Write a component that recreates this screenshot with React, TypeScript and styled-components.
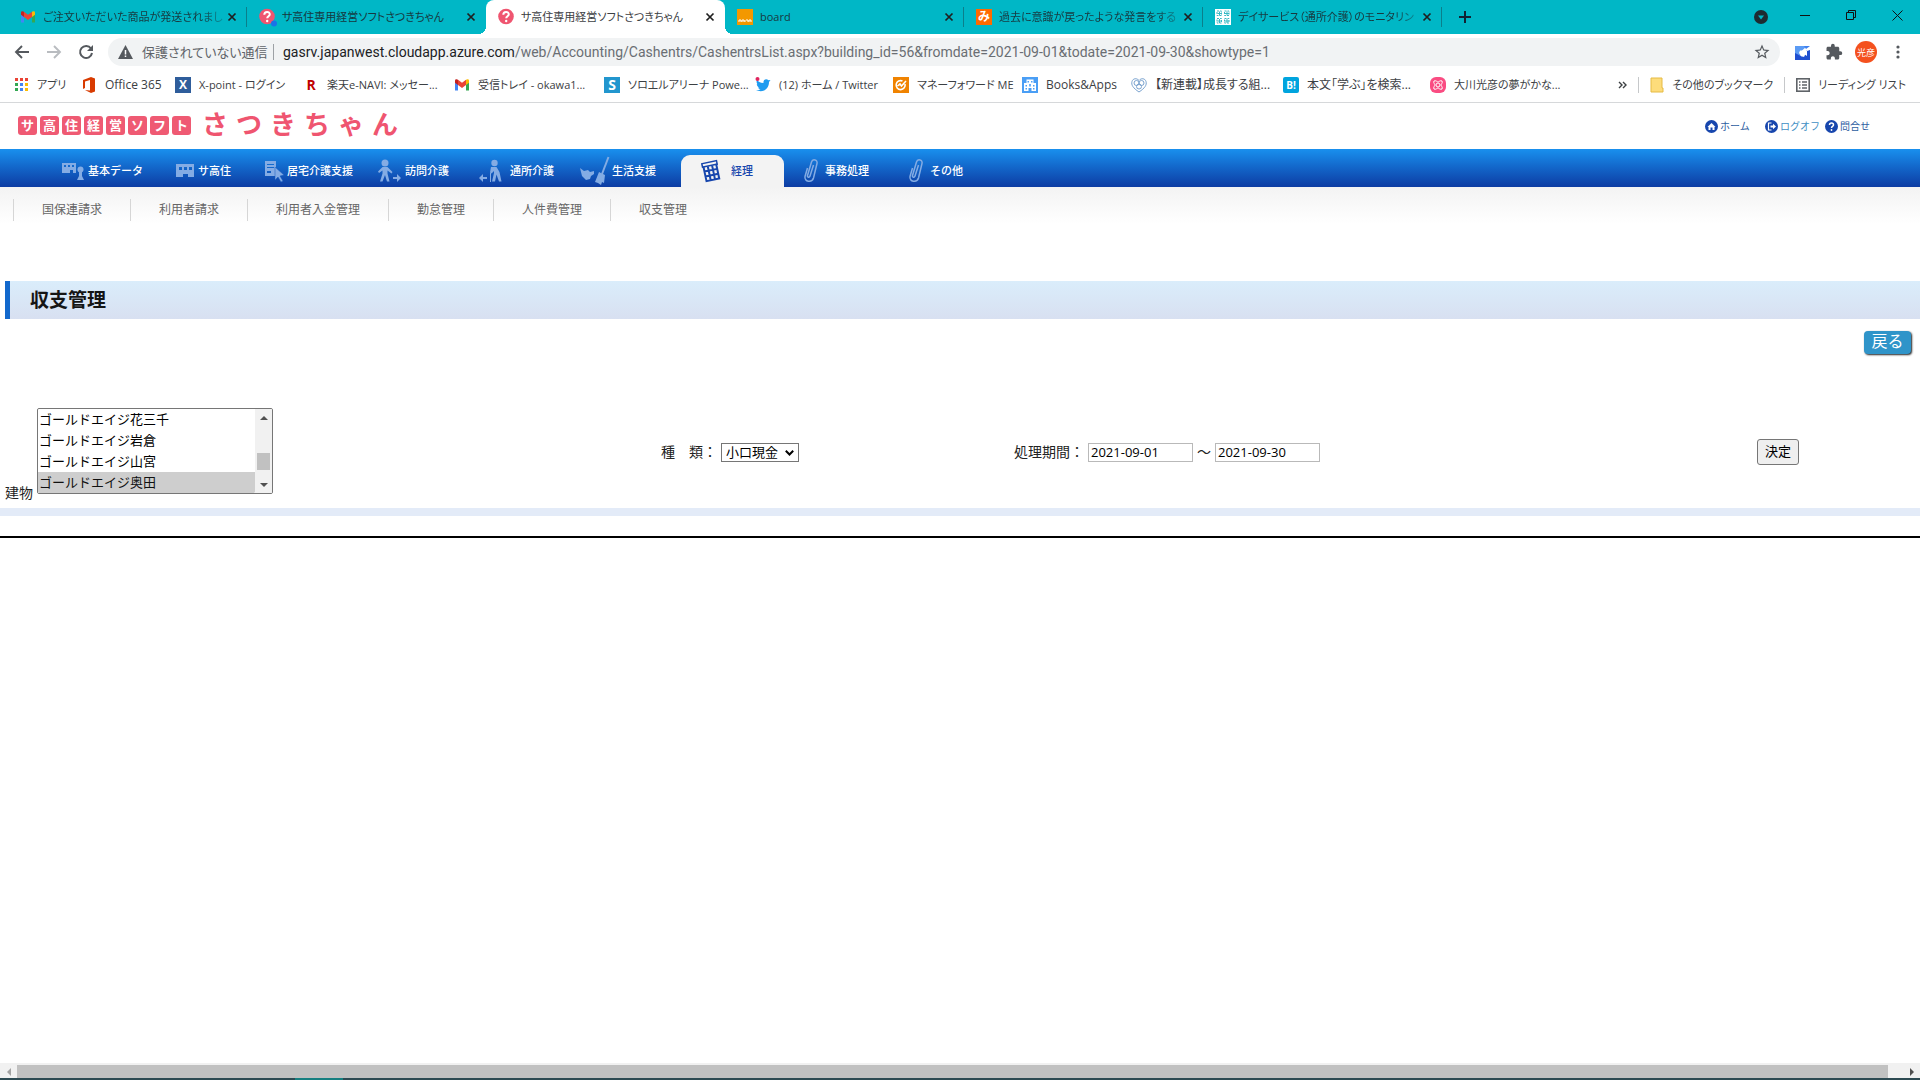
import React from 'react';
import styled, { createGlobalStyle, css } from 'styled-components';
import { MdExtension, MdStarOutline } from 'react-icons/md';

const uiFont = '"Open Sans", "Noto Sans CJK JP", sans-serif';
const pageFont = '"Open Sans", "Noto Sans CJK JP", sans-serif';

const GlobalStyle = createGlobalStyle`
  *, *::before, *::after { box-sizing: border-box; }
  body { margin: 0; background: #fff; font-family: ${pageFont}; font-size: 14px; color: #222; }
  button, input, select { font-family: inherit; margin: 0; }
  a { text-decoration: none; color: inherit; }
  svg { display: block; flex: none; }
`;

const Window = styled.div`
  min-height: 100vh;
  display: flex;
  flex-direction: column;
  overflow: hidden;
`;

/* ---------- browser frame ---------- */
const TabStrip = styled.div`
  display: flex;
  align-items: stretch;
  height: 34px;
  padding-left: 8px;
  background: #00b7c6;
  font-family: ${uiFont};
  font-feature-settings: "palt";
  font-size: 11px;
`;
const Tab = styled.div<{ $active?: boolean; $line?: boolean }>`
  display: flex;
  align-items: center;
  width: 239px;
  padding: 0 9px 0 12px;
  color: #17393f;
  ${p => p.$active && css`
    position: relative;
    background: #fff;
    border-radius: 8px 8px 0 0;
    color: #3c4043;
    &::before, &::after {
      content: "";
      position: absolute;
      bottom: 0;
      width: 8px;
      height: 8px;
    }
    &::before { right: 100%; background: radial-gradient(circle at 0 0, transparent 8px, #fff 8px); }
    &::after { left: 100%; background: radial-gradient(circle at 100% 0, transparent 8px, #fff 8px); }
  `}
  ${p => p.$line && css`
    background: linear-gradient(#0b7f8b, #0b7f8b) right center / 1px 20px no-repeat;
  `}
`;
const TabTitle = styled.span<{ $fade?: boolean }>`
  flex: 1;
  min-width: 0;
  margin-left: 7px;
  overflow: hidden;
  white-space: nowrap;
  line-height: 20px;
  ${p => p.$fade && css`mask-image: linear-gradient(90deg, #000 86%, rgba(0, 0, 0, 0.2));`}
`;
const PlainButton = styled.button`
  display: flex;
  align-items: center;
  justify-content: center;
  padding: 0;
  border: 0;
  background: none;
  color: inherit;
  flex: none;
`;
const TabClose = styled(PlainButton)`
  width: 12px;
  height: 16px;
  color: #1f1f1f;
`;
const NewTab = styled(PlainButton)`
  width: 46px;
  color: #123;
`;
const WindowControls = styled.div`
  display: flex;
  margin-left: auto;
  color: #111;
`;
const TabSearch = styled(PlainButton)`
  width: 42px;
`;
const WindowButton = styled(PlainButton)`
  width: 46px;
  padding-bottom: 4px;
`;
const Toolbar = styled.div`
  display: flex;
  align-items: center;
  height: 36px;
  padding: 0 6px;
  color: #55595e;
  font-family: ${uiFont};
`;
const ToolButton = styled(PlainButton)<{ $dim?: boolean }>`
  width: 32px;
  height: 28px;
  color: ${p => (p.$dim ? '#b9bcc0' : '#55595e')};
`;
const AddressBar = styled.div`
  display: flex;
  align-items: center;
  flex: 1;
  height: 28px;
  margin: 0 6px;
  padding: 0 9px 0 10px;
  border-radius: 14px;
  background: #f1f3f4;
`;
const Security = styled.span`
  width: 132px;
  margin-left: 9px;
  border-right: 1px solid #9da1a5;
  font-size: 13px;
  font-feature-settings: "palt";
  line-height: 16px;
  white-space: nowrap;
  color: #5f6368;
`;
const AddressText = styled.span`
  flex: 1;
  margin-left: 9px;
  font-family: Roboto, sans-serif;
  font-size: 14px;
  line-height: 20px;
  white-space: nowrap;
  color: #6a6e73;
  b { font-weight: 400; color: #202124; }
`;
const Avatar = styled.span`
  display: flex;
  align-items: center;
  justify-content: center;
  width: 22px;
  height: 22px;
  border-radius: 50%;
  background: #f4511e;
  color: #fff;
  font-size: 9px;
`;
const Bookmarks = styled.nav`
  display: flex;
  align-items: center;
  height: 33px;
  padding: 0 14px 2px 13px;
  border-bottom: 1px solid #d6d8da;
  font-family: ${uiFont};
  font-feature-settings: "palt";
  font-size: 12px;
  color: #3c4043;
`;
const Bookmark = styled.a<{ $w?: number; $kana?: boolean }>`
  display: flex;
  align-items: center;
  gap: 8px;
  ${p => p.$w && css`width: ${p.$w}px;`}
  font-size: ${p => (p.$kana ? 11 : 12)}px;
  line-height: 20px;
  white-space: nowrap;
`;
const BookmarkEnd = styled.div`
  display: flex;
  align-items: center;
  gap: 11px;
  margin-left: auto;
`;
const Divider = styled.span`
  width: 1px;
  height: 16px;
  background: #c6c8ca;
`;
const Badge = styled.span<{ $bg: string; $fg?: string; $r?: number; $size?: number }>`
  display: flex;
  align-items: center;
  justify-content: center;
  flex: none;
  width: 16px;
  height: 16px;
  border-radius: ${p => p.$r || 0}px;
  background: ${p => p.$bg};
  color: ${p => p.$fg || '#fff'};
  font-size: ${p => p.$size || 12}px;
  font-weight: 700;
  line-height: 16px;
`;

/* ---------- application ---------- */
const Header = styled.header`
  display: flex;
  justify-content: space-between;
  align-items: flex-start;
  height: 46px;
  padding: 7px 50px 0 18px;
`;
const Brand = styled.div`
  display: flex;
  align-items: center;
  gap: 11px;
  height: 30px;
  color: #ef5570;
`;
const BrandTiles = styled.div`
  display: flex;
  gap: 3px;
`;
const BrandTile = styled.span`
  width: 19px;
  height: 19px;
  border-radius: 3px;
  background: #ef5a73;
  color: #fff;
  font-size: 13px;
  font-weight: 700;
  line-height: 18px;
  text-align: center;
`;
const BrandName = styled.div`
  display: flex;
  gap: 8px;
  font-size: 26px;
  font-weight: 700;
  line-height: 28px;
  padding-bottom: 2px;
`;
const UserLinks = styled.div`
  display: flex;
  align-items: center;
  padding-top: 8px;
  font-size: 10px;
  line-height: 16px;
`;
const UserLink = styled.a<{ $w?: number; $c?: string }>`
  display: flex;
  align-items: center;
  gap: 2px;
  ${p => p.$w && css`width: ${p.$w}px;`}
  color: ${p => p.$c || '#2d5d9f'};
`;
const MainNav = styled.nav`
  display: flex;
  align-items: flex-end;
  height: 38px;
  padding-left: 44px;
  background: linear-gradient(#1990ee, #1369cc 45%, #0d3ca3);
`;
const NavItem = styled.a<{ $active?: boolean }>`
  display: flex;
  align-items: center;
  height: 32px;
  padding: 0 12px;
  color: #fff;
  font-size: 11px;
  font-weight: 500;
  line-height: 32px;
  white-space: nowrap;
  ${p => p.$active && css`
    margin-left: 13px;
    padding: 0 31px 0 12px;
    border-radius: 9px 9px 0 0;
    background: #f3f3f3;
    color: #1746ad;
  `}
`;
const NavLabel = styled.span`
  height: 32px;
`;
const NavIcon = styled.span<{ $w: number; $gap?: number }>`
  display: flex;
  justify-content: flex-end;
  width: ${p => p.$w}px;
  padding-right: ${p => p.$gap ?? 4}px;
  color: #84ace4;
`;
const SubNav = styled.nav`
  display: flex;
  align-items: center;
  height: 46px;
  padding-left: 13px;
  background: linear-gradient(#f3f3f3, #fff 80%);
`;
const SubItem = styled.a`
  height: 22px;
  padding: 0 28px;
  border-left: 1px solid #d6d6d6;
  color: #666;
  font-size: 12px;
  line-height: 22px;
`;
const PageTitle = styled.h1`
  margin: 48px 0 0 5px;
  padding-left: 20px;
  border-left: 5px solid #1268cc;
  background: linear-gradient(#daedfb, #d8e0f1);
  color: #151515;
  font-size: 19px;
  font-weight: 700;
  line-height: 38px;
`;
const Actions = styled.div`
  display: flex;
  justify-content: flex-end;
  padding: 12px 9px 0;
`;
const BackButton = styled.button`
  width: 47px;
  height: 23px;
  padding: 0 0 3px;
  border: 0;
  border-radius: 4px;
  background: #2f94c9;
  box-shadow: 1px 1px 2px #222;
  color: #fff;
  font-size: 16px;
  line-height: 20px;
`;
const Filters = styled.form`
  display: grid;
  grid-template-columns: 656fr 353fr 743fr 163fr;
  margin-top: 54px;
  padding: 0 0 14px 5px;
  border-bottom: 8px solid #e3ebf8;
`;
const Field = styled.div<{ $end?: boolean }>`
  display: flex;
  align-items: ${p => (p.$end ? 'flex-end' : 'center')};
  gap: 4px;
  height: 86px;
  padding-top: ${p => (p.$end ? 0 : 2)}px;
  white-space: nowrap;
`;
const FieldLabel = styled.label`
  line-height: 20px;
`;
const BuildingLabel = styled(FieldLabel)`
  line-height: 2px;
`;
const ListFrame = styled.div`
  display: flex;
  width: 236px;
  height: 86px;
  border: 1px solid #767676;
  border-radius: 2px;
  overflow: hidden;
`;
const BuildingList = styled.select`
  flex: 1;
  height: 84px;
  padding: 0;
  border: 0;
  outline: 0;
  overflow: hidden;
  background: #fff;
  color: #000;
  font-size: 13px;
  option {
    height: 21px;
    min-height: 21px;
    padding: 0 1px 2px;
    line-height: 17px;
  }
  option:checked {
    background: #cecece linear-gradient(#cecece, #cecece);
    color: #111;
  }
`;
const ScrollColumn = styled.div`
  display: flex;
  flex-direction: column;
  align-items: center;
  width: 17px;
  background: #f1f1f1;
`;
const ScrollEnd = styled.span`
  display: flex;
  align-items: center;
  justify-content: center;
  width: 17px;
  height: 17px;
`;
const ListThumb = styled.span`
  width: 13px;
  height: 17px;
  margin: 27px 0 6px;
  background: #c1c1c1;
`;
const KindBox = styled.span`
  position: relative;
  display: flex;
  svg {
    position: absolute;
    right: 5px;
    top: 7px;
    pointer-events: none;
  }
`;
const KindSelect = styled.select`
  appearance: none;
  width: 78px;
  height: 19px;
  padding: 0 0 0 4px;
  border: 1px solid #767676;
  border-radius: 0;
  background: #fff;
  color: #000;
  font-size: 13px;
  line-height: 16px;
`;
const DateInput = styled.input`
  width: 105px;
  height: 19px;
  padding: 0 2px;
  border: 1px solid #b9b9b9;
  color: #000;
  font-size: 13px;
`;
const SubmitButton = styled.button`
  width: 42px;
  height: 26px;
  padding: 0 0 2px;
  border: 1px solid #767676;
  border-radius: 3px;
  background: #efefef;
  color: #000;
  font-size: 13px;
  line-height: 20px;
`;
const Results = styled.main`
  flex: 1;
  margin-top: 20px;
  border-top: 2px solid #000;
`;
const PageScroll = styled.div`
  display: flex;
  height: 15px;
  padding-top: 2px;
  background: #f1f1f1;
`;
const PageScrollEnd = styled.span<{ $w: number; $right?: boolean }>`
  display: flex;
  align-items: center;
  justify-content: ${p => (p.$right ? 'flex-end' : 'center')};
  width: ${p => p.$w}px;
  padding-right: ${p => (p.$right ? 6 : 0)}px;
`;
const PageThumb = styled.span`
  flex: 1;
  background: #c1c1c1;
`;
const TaskEdge = styled.div`
  height: 2px;
  background: linear-gradient(90deg, transparent 295px, #167f80 295px, #167f80 343px, transparent 343px), #2d4a52;
`;

/* ---------- drawings ---------- */
const Cross = () => (
  <svg width="10" height="10" viewBox="0 0 10 10"><path d="M1.5 1.5l7 7M8.5 1.5l-7 7" stroke="currentColor" strokeWidth="1.7" /></svg>
);
const Gmail = () => (
  <svg width="16" height="16" viewBox="0 0 16 16">
    <path d="M1 4v9.500h3V7z" fill="#4285f4" /><path d="M15 4v9.500h-3V7z" fill="#34a853" />
    <path d="M1 3.500C1 2 3 1.800 4 2.700V8L1 5.800z" fill="#c5221f" />
    <path d="M4 2.700L8 5.800l4-3.100V8l-4 3-4-3z" fill="#ea4335" />
    <path d="M15 3.500C15 2 13 1.800 12 2.700V8l3-2.200z" fill="#fbbc04" />
  </svg>
);
const Question = ({ dot }: { dot?: boolean }) => (
  <svg width="16" height="18" viewBox="0 0 16 18" overflow="visible">
    <circle cx="8" cy="8.500" r="7.800" fill="#ef5570" />
    <path d="M5.300 6.800C5.300 3 10.800 3 10.800 6.300c0 2-2.600 2-2.600 4" fill="none" stroke="#fff" strokeWidth="2" />
    <circle cx="8.200" cy="13" r="1.200" fill="#fff" />
    {dot && <circle cx="15" cy="15.500" r="3" fill="#1a73e8" />}
  </svg>
);
const GridFav = () => (
  <svg width="16" height="16" viewBox="0 0 16 16">
    <rect width="16" height="16" fill="#fff" />
    {[1.5, 9].map(x => [1.5, 9].map(y => (
      <g key={`${x}-${y}`} fill="none" stroke="#35b9c4">
        <rect x={x + 0.5} y={y + 0.5} width="4.500" height="4.500" strokeDasharray="2 1" /><path d={`M${x + 1} ${y + 3}h4M${x + 3} ${y + 1}v4`} />
      </g>
    )))}
  </svg>
);
const BoardFav = () => (
  <svg width="16" height="16" viewBox="0 0 16 16"><rect width="16" height="16" fill="#f39800" /><path d="M2 13v-2h2v2m1 0v-2h2v2m1-2v2m1-2h2v2m1 0v-2h2v2" stroke="#fff" strokeWidth="1" fill="none" /></svg>
);
const Apps = () => (
  <svg width="16" height="16" viewBox="0 0 16 16">
    {['#ea4335', '#ea4335', '#ea4335', '#34a853', '#4285f4', '#fbbc04', '#34a853', '#4285f4', '#fbbc04'].map((c, i) => (
      <rect key={i} x={2 + (i % 3) * 5} y={1 + Math.floor(i / 3) * 5} width="3" height="3" fill={c} />
    ))}
  </svg>
);
const Office = () => (
  <svg width="16" height="16" viewBox="0 0 16 16"><path d="M10 0L2 3v9l2-1V4.500l5-1.500v10.500L4 13l6 3 4-1.500v-13z" fill="#d83b01" /></svg>
);
const Twitter = () => (
  <svg width="16" height="16" viewBox="0 0 16 16">
    <path d="M1 13c6 3 13 0 13-8l1.500-2-2 .3C11 1 8 3 8.500 6 5 6 3 4.500 2 3c-1 2 0 4 1 4.500L1.800 7c0 2 1.200 3 2.500 3.500H3c.5 1 1.500 1.600 2.500 1.700C4 13 2.500 13.200 1 13z" fill="#1d9bf0" />
    <circle cx="2.500" cy="2" r="2" fill="#e0245e" />
  </svg>
);
const MoneyForward = () => (
  <svg width="16" height="16" viewBox="0 0 16 16"><rect width="16" height="16" fill="#f08300" /><path d="M9.500 4A4.500 4.500 0 1 0 12 7M4.500 9L7 7l1.500 2L13 4" fill="none" stroke="#fff" strokeWidth="1.600" /></svg>
);
const Books = () => (
  <svg width="16" height="16" viewBox="0 0 16 16"><rect width="16" height="16" fill="#4a9ef5" /><path d="M2 6v8h4.500v-3h3v3H14V6h-2.500V2.500h-7V6z" fill="#fff" /><path d="M5.500 4h1.500v1.500H5.500zM9 4h1.500v1.500H9zM3.500 8H5v1.500H3.500zM11 8h1.500v1.500H11zM7.200 7h1.600v2.500H7.200zM3.500 11H5v1.500H3.500zM11 11h1.500v1.500H11z" fill="#4a9ef5" /></svg>
);
const HeartFav = () => (
  <svg width="16" height="16" viewBox="0 0 16 16" fill="none" stroke="#7aa3cf"><path d="M8 15C2 11 0 8 1 4.500 2 1 6 1 8 3.500 10 1 14 1 15 4.500 16 8 14 11 8 15z" /><circle cx="5.500" cy="6" r="2.500" /><circle cx="10.500" cy="6" r="2.500" /><circle cx="8" cy="9.500" r="2.500" /></svg>
);
const Flower = () => (
  <svg width="16" height="16" viewBox="0 0 16 16"><rect width="16" height="16" rx="6" fill="#fa4c82" /><g fill="none" stroke="#fff"><circle cx="8" cy="8" r="2" /><path d="M4 4c2-1 3 1 4 1s2-2 4-1c1 2-1 3-1 4s2 2 1 4c-2 1-3-1-4-1s-2 2-4 1c-1-2 1-3 1-4s-2-2-1-4z" /></g></svg>
);
const Folder = () => (
  <svg width="14" height="16" viewBox="0 0 14 16"><path d="M1 1h11v10h1v4H1z" fill="#fddc7b" stroke="#e6bb45" /></svg>
);
const ReadingList = () => (
  <svg width="14" height="14" viewBox="0 0 14 14"><rect x=".8" y=".8" width="12.400" height="12.400" fill="none" stroke="#5f6368" strokeWidth="1.600" /><path d="M3 4h1.500M6 4h5M3 7h1.500M6 7h5M3 10h1.500M6 10h5" stroke="#5f6368" strokeWidth="1.400" /></svg>
);

const Building = ({ person }: { person?: boolean }) => (
  <svg width={person ? 23 : 19} height="20" viewBox={person ? '0 0 23 20' : '0 0 19 20'} fill="currentColor">
    {person
      ? <><path fillRule="evenodd" d="M1 2h14v10h-3V9H9v3H1zM3 4v2h2V4zm4 0v2h2V4zm4 0v2h2V4z" /><circle cx="19.500" cy="8.500" r="3" /><path d="M18 11h3v4l2 4h-7l2-4z" /></>
      : <path fillRule="evenodd" d="M1 3h18v13h-6v-3H8v3H1zM4 6v3h3V6zm5 0v3h3V6zm5 0v3h3V6z" />}
  </svg>
);
const Plan = () => (
  <svg width="21" height="24" viewBox="0 0 21 24"><path fill="currentColor" fillRule="evenodd" d="M1 2h11v15H1zm2 3v1h7V5zm0 3v1h7V8zm0 4v2h4v-2z" /><path fill="currentColor" stroke="#1458bd" strokeWidth=".5" d="M11 8l9 8-4 1 3 5-2 1-3-5-3 3z" /></svg>
);
const Walker = ({ left }: { left?: boolean }) => (
  <svg width="24" height="24" viewBox="0 0 24 24" fill="currentColor">
    {left ? (
      <><circle cx="15.500" cy="4" r="3.200" /><path d="M12 8h5.500l3 5 2 9.500h-2.500l-2.500-7-1.500 7h-3l2-8.500v-2l-2.500 2.500-1.500-1z" /><path d="M11.500 14v9" stroke="currentColor" /><path d="M0 19l4-4v3h4v2H4v3z" /></>
    ) : (
      <><circle cx="8" cy="4" r="3.500" /><path d="M5.500 8h5l5 5-1 1.500-4-3v3l2 8h-2.500L8 16l-2.500 6.500H3l2.500-8v-3L2 14l-1-1.500z" /><path d="M24 19l-4-4v3h-4v2h4v3z" /></>
    )}
  </svg>
);
const Broom = () => (
  <svg width="30" height="30" viewBox="0 0 30 30" fill="currentColor"><path d="M0 12l4 3 4-1 2 2 4-1v3l-3 2-1 3-4 1-4-4z" /><path d="M28.500 1L22 18" stroke="currentColor" strokeWidth="2" /><path d="M19 16l6 3-1 8-2-1-1 3-3-2-3-1z" /></svg>
);
const Calculator = () => (
  <svg width="20" height="24" viewBox="1 0 20 24"><g transform="rotate(-12 11 12)" fill="none" stroke="#1746ad"><path d="M3.500 3h15v3.500h-15z" strokeWidth="1.500" /><path d="M4.500 6v15h13V6M4.500 11.200h13M4.500 16.200h13M8.800 7v14M13.200 7v14" strokeWidth="2" /></g></svg>
);
const Clip = () => (
  <svg width="16" height="26" viewBox="0 0 16 26" fill="none" stroke="currentColor" strokeWidth="1.500"><path d="M10.500 7L7 18c-.6 2-3 1.500-2.500-.5L8.500 4c1-3.500 6.500-2.500 5.500 1.500L10.500 20c-1.500 5-9.500 4-8.500-1.500L4.500 10" /></svg>
);
const Disc = ({ kind }: { kind: 'home' | 'off' | 'help' }) => (
  <svg width="13" height="13" viewBox="0 0 13 13">
    <circle cx="6.500" cy="6.500" r="6.500" fill="#1746ad" />
    {kind === 'home' && <path d="M2.500 7L6.500 3l4 4h-1v3H7.500V7.500h-2V10h-2V7z" fill="#fff" />}
    {kind === 'off' && <><path d="M6.500 3H3.500v7h3" fill="none" stroke="#fff" strokeWidth="1.200" /><path d="M5.500 5.500H8V3.800l3 2.700-3 2.700V7.500H5.500z" fill="#fff" /></>}
    {kind === 'help' && <><path d="M4.500 5c0-2.600 4-2.600 4 0 0 1.500-2 1.300-2 3" fill="none" stroke="#fff" strokeWidth="1.500" /><circle cx="6.500" cy="10" r=".9" fill="#fff" /></>}
  </svg>
);

/* ---------- data ---------- */
const tabs = [
  { title: 'ご注文いただいた商品が発送されまし', icon: <Gmail />, fade: true, line: true },
  { title: 'サ高住専用経営ソフトさつきちゃん', icon: <Question dot /> },
  { title: 'サ高住専用経営ソフトさつきちゃん', icon: <Question />, active: true },
  { title: 'board', icon: <BoardFav />, line: true },
  { title: '過去に意識が戻ったような発言をする', icon: <Badge $bg="#ff6a00">み</Badge>, fade: true, line: true },
  { title: 'デイサービス（通所介護）のモニタリン', icon: <GridFav />, fade: true, line: true },
];
const bookmarks = [
  { label: 'アプリ', icon: <Apps />, w: 68, kana: true },
  { label: 'Office 365', icon: <Office />, w: 94 },
  { label: 'X-point - ログイン', icon: <Badge $bg="#2f5d9b">X</Badge>, w: 128, kana: true },
  { label: '楽天e-NAVI: メッセー...', icon: <Badge $bg="#fff" $fg="#bf0000" $size={14}>R</Badge>, w: 151, kana: true },
  { label: '受信トレイ - okawa1...', icon: <Gmail />, w: 150, kana: true },
  { label: 'ソロエルアリーナ Powe...', icon: <Badge $bg="#2296ce" $size={14}>S</Badge>, w: 151, kana: true },
  { label: '(12) ホーム / Twitter', icon: <Twitter />, w: 138, kana: true },
  { label: 'マネーフォワード ME', icon: <MoneyForward />, w: 129, kana: true },
  { label: 'Books&Apps', icon: <Books />, w: 109 },
  { label: '【新連載】成長する組...', icon: <HeartFav />, w: 152 },
  { label: '本文「学ぶ」を検索...', icon: <Badge $bg="#00a4de" $r={2} $size={10}>B!</Badge>, w: 147 },
  { label: '大川光彦の夢がかな...', icon: <Flower />, w: 150, kana: true },
];
const navItems = [
  { label: '基本データ', icon: <Building person />, w: 32 },
  { label: 'サ高住', icon: <Building />, w: 31 },
  { label: '居宅介護支援', icon: <Plan />, w: 32, gap: 2 },
  { label: '訪問介護', icon: <Walker />, w: 28 },
  { label: '通所介護', icon: <Walker left />, w: 37, gap: 7 },
  { label: '生活支援', icon: <Broom />, w: 34, gap: 2 },
  { label: '経理', icon: <Calculator />, w: 38, gap: 10, active: true },
  { label: '事務処理', icon: <Clip />, w: 29, gap: 6 },
  { label: 'その他', icon: <Clip />, w: 37, gap: 6 },
];
const subItems = ['国保連請求', '利用者請求', '利用者入金管理', '勤怠管理', '人件費管理', '収支管理'];
const buildings = ['ゴールドエイジ花三千', 'ゴールドエイジ岩倉', 'ゴールドエイジ山宮', 'ゴールドエイジ奥田'];

function BrowserFrame() {
  return (
    <>
      <TabStrip>
        {tabs.map((t, i) => (
          <Tab key={i} $active={t.active} $line={t.line}>
            {t.icon}
            <TabTitle $fade={t.fade}>{t.title}</TabTitle>
            <TabClose aria-label="タブを閉じる"><Cross /></TabClose>
          </Tab>
        ))}
        <NewTab aria-label="新しいタブ">
          <svg width="12" height="12" viewBox="0 0 12 12"><path d="M6 0v12M0 6h12" stroke="currentColor" strokeWidth="2" /></svg>
        </NewTab>
        <WindowControls>
          <TabSearch aria-label="タブを検索">
            <svg width="14" height="14" viewBox="0 0 14 14"><circle cx="7" cy="7" r="7" fill="#1d2b30" /><path d="M4 5.500h6L7 9.500z" fill="#00b7c6" /></svg>
          </TabSearch>
          <WindowButton aria-label="最小化"><svg width="10" height="10" viewBox="0 0 10 10"><path d="M0 5.500h10" stroke="currentColor" /></svg></WindowButton>
          <WindowButton aria-label="元に戻す"><svg width="10" height="10" viewBox="0 0 10 10"><path d="M.5 2.500h7v7h-7zM2.500 2.500v-2h7v7h-2" fill="none" stroke="currentColor" /></svg></WindowButton>
          <WindowButton aria-label="閉じる"><svg width="11" height="11" viewBox="0 0 11 11"><path d="M.5.5l10 10M10.500.5l-10 10" stroke="currentColor" /></svg></WindowButton>
        </WindowControls>
      </TabStrip>
      <Toolbar>
        <ToolButton aria-label="戻る"><svg width="16" height="16" viewBox="0 0 16 16"><path d="M15 8H2M8 2L2 8l6 6" fill="none" stroke="currentColor" strokeWidth="1.900" /></svg></ToolButton>
        <ToolButton $dim aria-label="進む"><svg width="16" height="16" viewBox="0 0 16 16"><path d="M1 8h13M8 2l6 6-6 6" fill="none" stroke="currentColor" strokeWidth="1.900" /></svg></ToolButton>
        <ToolButton aria-label="再読み込み"><svg width="16" height="16" viewBox="0 0 16 16"><path d="M13 4.500A6 6 0 1 0 14 9" fill="none" stroke="currentColor" strokeWidth="2" /><path d="M15 1v6H9z" fill="currentColor" /></svg></ToolButton>
        <AddressBar>
          <svg width="15" height="14" viewBox="0 0 15 14"><path d="M7.500 0L15 14H0z" fill="currentColor" /><path d="M7.500 5v4.500M7.500 10.500V12" stroke="#fff" strokeWidth="1.500" /></svg>
          <Security>保護されていない通信</Security>
          <AddressText><b>gasrv.japanwest.cloudapp.azure.com</b>/web/Accounting/Cashentrs/CashentrsList.aspx?building_id=56&amp;fromdate=2021-09-01&amp;todate=2021-09-30&amp;showtype=1</AddressText>
          <MdStarOutline size={18} />
        </AddressBar>
        <ToolButton aria-label="拡張機能"><svg width="15" height="15" viewBox="0 0 15 15"><path d="M0 1h12L6 6.500V9l-6 6z" fill="#5b9bf4" /><path d="M0 15V8l4 2 5 2 2-4V5h4v10z" fill="#1f4fd0" /><path d="M5 5.500h6L15 3v2l-3 1v5L9 9l-2 3-3-4z" fill="#fff" /><path d="M9 1h6l-4 3z" fill="#3f80ee" /></svg></ToolButton>
        <ToolButton aria-label="拡張機能の管理"><MdExtension size={18} /></ToolButton>
        <ToolButton aria-label="プロフィール"><Avatar>光彦</Avatar></ToolButton>
        <ToolButton aria-label="メニュー"><svg width="4" height="16" viewBox="0 0 4 16" fill="currentColor"><circle cx="2" cy="3" r="1.600" /><circle cx="2" cy="8" r="1.600" /><circle cx="2" cy="13" r="1.600" /></svg></ToolButton>
      </Toolbar>
      <Bookmarks>
        {bookmarks.map(b => (
          <Bookmark href="#" key={b.label} $w={b.w} $kana={b.kana}>{b.icon}{b.label}</Bookmark>
        ))}
        <BookmarkEnd>
          <svg width="9" height="8" viewBox="0 0 9 8"><path d="M1 1l3 3-3 3M5 1l3 3-3 3" fill="none" stroke="#3c4043" strokeWidth="1.400" /></svg>
          <Divider />
          <Bookmark href="#" $kana><Folder />その他のブックマーク</Bookmark>
          <Divider />
          <Bookmark href="#" $kana><ReadingList />リーディング リスト</Bookmark>
        </BookmarkEnd>
      </Bookmarks>
    </>
  );
}

export default function App() {
  return (
    <Window>
      <GlobalStyle />
      <BrowserFrame />
      <Header>
        <Brand>
          <BrandTiles>{[...'サ高住経営ソフト'].map(c => <BrandTile key={c}>{c}</BrandTile>)}</BrandTiles>
          <BrandName>{[...'さつきちゃん'].map(c => <span key={c}>{c}</span>)}</BrandName>
        </Brand>
        <UserLinks>
          <UserLink href="#" $w={60}><Disc kind="home" />ホーム</UserLink>
          <UserLink href="#" $w={60} $c="#3f8fc4"><Disc kind="off" />ログオフ</UserLink>
          <UserLink href="#"><Disc kind="help" />問合せ</UserLink>
        </UserLinks>
      </Header>
      <MainNav>
        {navItems.map(n => (
          <NavItem href="#" key={n.label} $active={n.active}><NavIcon $w={n.w} $gap={n.gap}>{n.icon}</NavIcon><NavLabel>{n.label}</NavLabel></NavItem>
        ))}
      </MainNav>
      <SubNav>{subItems.map(s => <SubItem href="#" key={s}>{s}</SubItem>)}</SubNav>
      <PageTitle>収支管理</PageTitle>
      <Actions><BackButton type="button">戻る</BackButton></Actions>
      <Filters onSubmit={e => e.preventDefault()}>
        <Field $end>
          <BuildingLabel htmlFor="building">建物</BuildingLabel>
          <ListFrame>
            <BuildingList id="building" size={4} defaultValue="ゴールドエイジ奥田">
              {buildings.map(b => <option key={b}>{b}</option>)}
            </BuildingList>
            <ScrollColumn>
              <ScrollEnd><svg width="8" height="4" viewBox="0 0 8 4"><path d="M0 4l4-4 4 4z" fill="#505050" /></svg></ScrollEnd>
              <ListThumb />
              <ScrollEnd><svg width="8" height="4" viewBox="0 0 8 4"><path d="M0 0l4 4 4-4z" fill="#505050" /></svg></ScrollEnd>
            </ScrollColumn>
          </ListFrame>
        </Field>
        <Field>
          <FieldLabel htmlFor="kind">種　類：</FieldLabel>
          <KindBox>
            <KindSelect id="kind"><option>小口現金</option></KindSelect>
            <svg width="9" height="6" viewBox="0 0 9 6"><path d="M.8.8l3.700 3.700L8.200.8" fill="none" stroke="#000" strokeWidth="2" /></svg>
          </KindBox>
        </Field>
        <Field>
          <FieldLabel htmlFor="from">処理期間：</FieldLabel>
          <DateInput id="from" defaultValue="2021-09-01" />
          <FieldLabel htmlFor="to">～</FieldLabel>
          <DateInput id="to" defaultValue="2021-09-30" />
        </Field>
        <Field><SubmitButton>決定</SubmitButton></Field>
      </Filters>
      <Results />
      <PageScroll>
        <PageScrollEnd $w={17}><svg width="4" height="8" viewBox="0 0 4 8"><path d="M4 0v8L0 4z" fill="#a3a3a3" /></svg></PageScrollEnd>
        <PageThumb />
        <PageScrollEnd $w={32} $right><svg width="4" height="8" viewBox="0 0 4 8"><path d="M0 0v8l4-4z" fill="#505050" /></svg></PageScrollEnd>
      </PageScroll>
      <TaskEdge />
    </Window>
  );
}
